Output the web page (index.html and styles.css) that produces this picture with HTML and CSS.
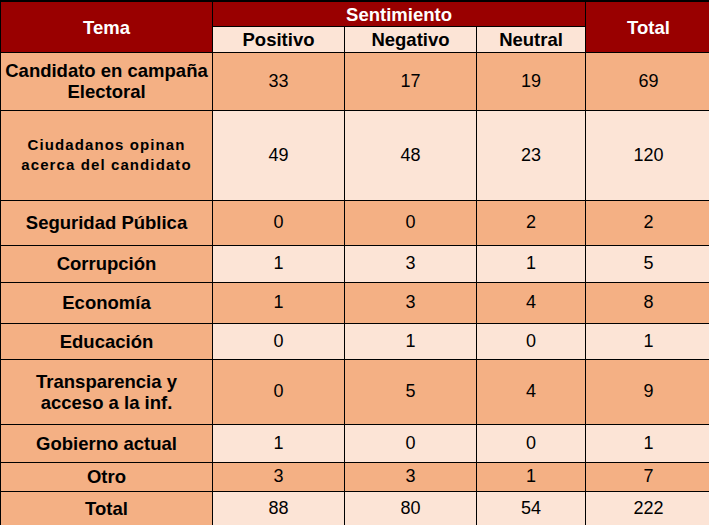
FILE: index.html
```html
<!DOCTYPE html>
<html lang="es">
<head>
<meta charset="utf-8">
<title>Sentimiento por tema</title>
<link rel="stylesheet" href="styles.css">
</head>
<body>
<table class="tbl">
  <colgroup>
    <col class="c-tema">
    <col class="c-num">
    <col class="c-num">
    <col class="c-neu">
    <col class="c-tot">
  </colgroup>
  <thead>
    <tr class="h1">
      <th class="hd" rowspan="2">Tema</th>
      <th class="hd" colspan="3">Sentimiento</th>
      <th class="hd" rowspan="2">Total</th>
    </tr>
    <tr class="h2">
      <th class="sub">Positivo</th>
      <th class="sub">Negativo</th>
      <th class="sub">Neutral</th>
    </tr>
  </thead>
  <tbody>
    <tr class="r-a r1"><th class="lbl">Candidato en campaña<br>Electoral</th><td>33</td><td>17</td><td>19</td><td>69</td></tr>
    <tr class="r-b r2"><th class="lbl small">Ciudadanos opinan<br>acerca del candidato</th><td>49</td><td>48</td><td>23</td><td>120</td></tr>
    <tr class="r-a r3"><th class="lbl">Seguridad Pública</th><td>0</td><td>0</td><td>2</td><td>2</td></tr>
    <tr class="r-b r4"><th class="lbl">Corrupción</th><td>1</td><td>3</td><td>1</td><td>5</td></tr>
    <tr class="r-a r5"><th class="lbl">Economía</th><td>1</td><td>3</td><td>4</td><td>8</td></tr>
    <tr class="r-b r6"><th class="lbl">Educación</th><td>0</td><td>1</td><td>0</td><td>1</td></tr>
    <tr class="r-a r7"><th class="lbl">Transparencia y<br>acceso a la inf.</th><td>0</td><td>5</td><td>4</td><td>9</td></tr>
    <tr class="r-b r8"><th class="lbl">Gobierno actual</th><td>1</td><td>0</td><td>0</td><td>1</td></tr>
    <tr class="r-a r9"><th class="lbl">Otro</th><td>3</td><td>3</td><td>1</td><td>7</td></tr>
    <tr class="r-b r10"><th class="lbl">Total</th><td>88</td><td>80</td><td>54</td><td>222</td></tr>
  </tbody>
</table>
</body>
</html>
```
FILE: styles.css
```css
html, body {
  margin: 0;
  padding: 0;
  overflow: hidden;
  background: #ffffff;
}

.tbl {
  border-collapse: collapse;
  table-layout: fixed;
  width: 711px;
  font-family: "Liberation Sans", Arial, sans-serif;
  color: #000;
  border-top: 2px solid #000;
}

.c-tema { width: 212px; }
.c-num { width: 132px; }
.c-neu { width: 109px; }
.c-tot { width: 126px; }

.tbl th,
.tbl td {
  border: 1px solid #000;
  padding: 0;
  text-align: center;
  vertical-align: middle;
  font-size: 18px;
  line-height: 21px;
}

.tbl th {
  font-weight: bold;
  font-size: 18.5px;
}

.tbl .hd {
  background: #990000;
  color: #ffffff;
  padding-top: 1px;
}

.tbl .sub {
  background: #fce4d6;
}

.tbl .lbl {
  background: #f4b084;
}

.tbl .lbl.small {
  font-size: 15px;
  letter-spacing: 1.1px;
  line-height: 20px;
}

.r-a td { background: #f4b084; }
.r-b td { background: #fce4d6; }

.h1 { height: 25px; }
.h2 { height: 26px; }
.r1 { height: 58px; }
.r2 { height: 90px; }
.r3 { height: 45px; }
.r4 { height: 37px; }
.r5 { height: 41px; }
.r6 { height: 36px; }
.r7 { height: 65px; }
.r8 { height: 38px; }
.r9 { height: 29px; }
.r10 { height: 34px; }
```
